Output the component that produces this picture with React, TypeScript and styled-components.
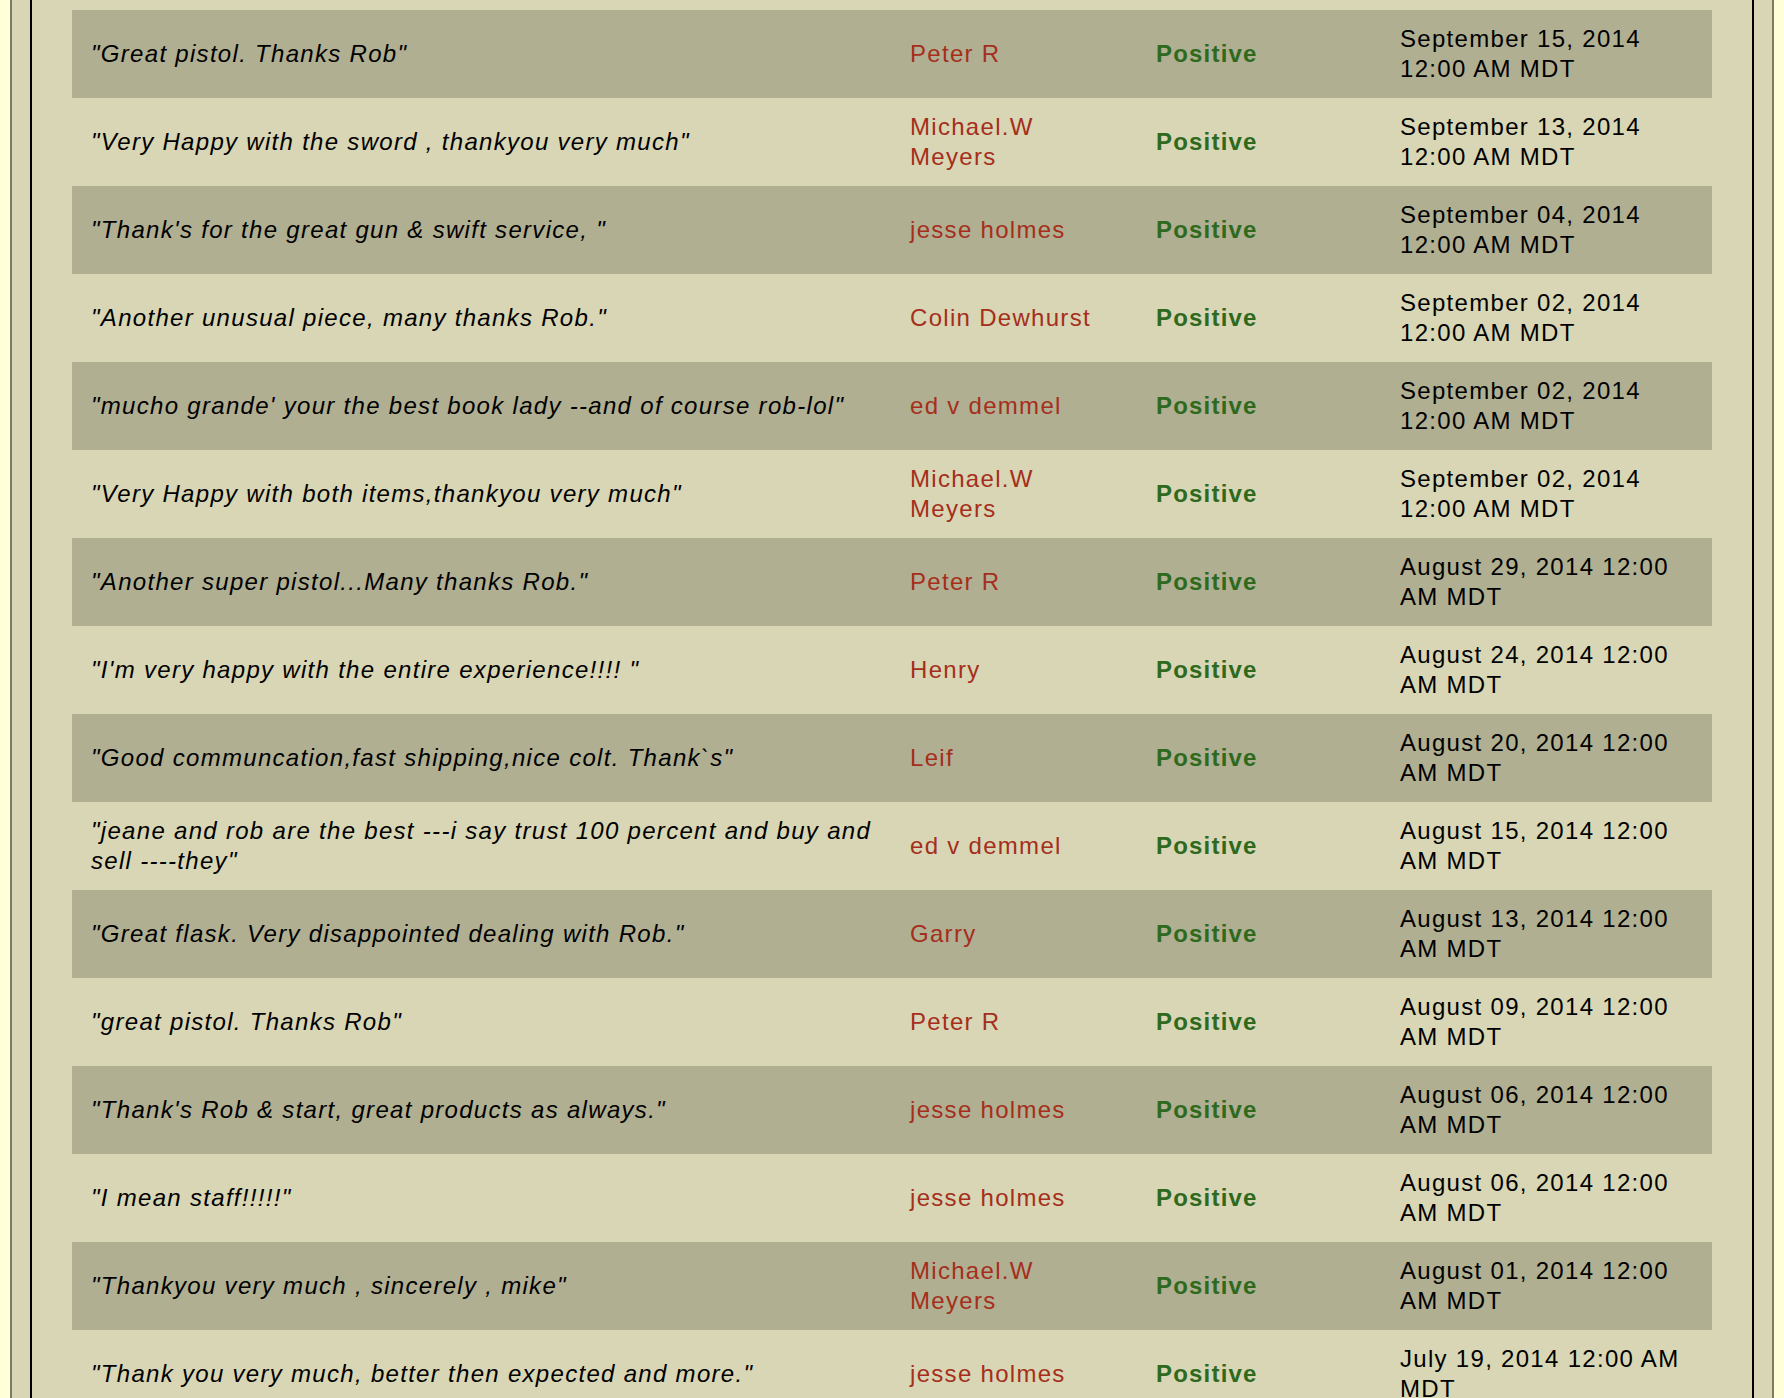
import React from "react";
import styled, { createGlobalStyle } from "styled-components";

const GlobalStyle = createGlobalStyle`
  html, body {
    margin: 0;
    padding: 0;
    background: #ffffd8;
  }
  body {
    padding: 0 10px;
    font-family: "Liberation Sans", Helvetica, Arial, sans-serif;
  }
`;

const OuterFrame = styled.div`
  background: #d8d6b4;
  border-left: 2px solid #7c7c64;
  border-right: 2px solid #7c7c64;
  padding: 0 18px;
  min-height: 1398px;
`;

const InnerPanel = styled.div`
  background: #d8d6b4;
  border-left: 2px solid #000;
  border-right: 2px solid #000;
  padding: 10px 40px;
  min-height: 1398px;
  box-sizing: border-box;
`;

const FeedbackList = styled.div`
  display: flex;
  flex-direction: column;
`;

const Row = styled.div<{ $shaded: boolean }>`
  display: grid;
  grid-template-columns: 819px 246px 244px 327px;
  align-items: center;
  min-height: 88px;
  background: ${(p) => (p.$shaded ? "#b0af92" : "#d8d6b4")};
  font-size: 24px;
  line-height: 30px;
  letter-spacing: 1.3px;
`;

const Cell = styled.div<{ $padRight?: number }>`
  padding: 0 ${(p) => p.$padRight ?? 20}px 0 19px;
`;

const Comment = styled(Cell)`
  font-style: italic;
  color: #000;
`;

const Name = styled(Cell)`
  color: #a52e1c;
`;

const Rating = styled(Cell)`
  color: #2e6a1e;
  font-weight: bold;
  letter-spacing: 1.2px;
`;

const DateCell = styled(Cell)`
  color: #000;
`;

type Entry = { comment: string; name: string; date: string };

const entries: Entry[] = [
  { comment: "Great pistol. Thanks Rob", name: "Peter R", date: "September 15, 2014 12:00 AM MDT" },
  { comment: "Very Happy with the sword , thankyou very much", name: "Michael.W Meyers", date: "September 13, 2014 12:00 AM MDT" },
  { comment: "Thank's for the great gun & swift service, ", name: "jesse holmes", date: "September 04, 2014 12:00 AM MDT" },
  { comment: "Another unusual piece, many thanks Rob.", name: "Colin Dewhurst", date: "September 02, 2014 12:00 AM MDT" },
  { comment: "mucho grande' your the best book lady --and of course rob-lol", name: "ed v demmel", date: "September 02, 2014 12:00 AM MDT" },
  { comment: "Very Happy with both items,thankyou very much", name: "Michael.W Meyers", date: "September 02, 2014 12:00 AM MDT" },
  { comment: "Another super pistol...Many thanks Rob.", name: "Peter R", date: "August 29, 2014 12:00 AM MDT" },
  { comment: "I'm very happy with the entire experience!!!! ", name: "Henry", date: "August 24, 2014 12:00 AM MDT" },
  { comment: "Good communcation,fast shipping,nice colt. Thank`s", name: "Leif", date: "August 20, 2014 12:00 AM MDT" },
  { comment: "jeane and rob are the best ---i say trust 100 percent and buy and sell ----they", name: "ed v demmel", date: "August 15, 2014 12:00 AM MDT" },
  { comment: "Great flask. Very disappointed dealing with Rob.", name: "Garry", date: "August 13, 2014 12:00 AM MDT" },
  { comment: "great pistol. Thanks Rob", name: "Peter R", date: "August 09, 2014 12:00 AM MDT" },
  { comment: "Thank's Rob & start, great products as always.", name: "jesse holmes", date: "August 06, 2014 12:00 AM MDT" },
  { comment: "I mean staff!!!!!", name: "jesse holmes", date: "August 06, 2014 12:00 AM MDT" },
  { comment: "Thankyou very much , sincerely , mike", name: "Michael.W Meyers", date: "August 01, 2014 12:00 AM MDT" },
  { comment: "Thank you very much, better then expected and more.", name: "jesse holmes", date: "July 19, 2014 12:00 AM MDT" },
  { comment: "Great pistol, thanks Rob", name: "Peter R", date: "July 15, 2014 12:00 AM MDT" },
];

export default function App() {
  return (
    <>
      <GlobalStyle />
      <OuterFrame>
        <InnerPanel>
          <FeedbackList>
            {entries.map((e, i) => (
              <Row key={i} $shaded={i % 2 === 0}>
                <Comment $padRight={8}>"{e.comment}"</Comment>
                <Name $padRight={25}>{e.name}</Name>
                <Rating>Positive</Rating>
                <DateCell $padRight={12}>{e.date}</DateCell>
              </Row>
            ))}
          </FeedbackList>
        </InnerPanel>
      </OuterFrame>
    </>
  );
}
